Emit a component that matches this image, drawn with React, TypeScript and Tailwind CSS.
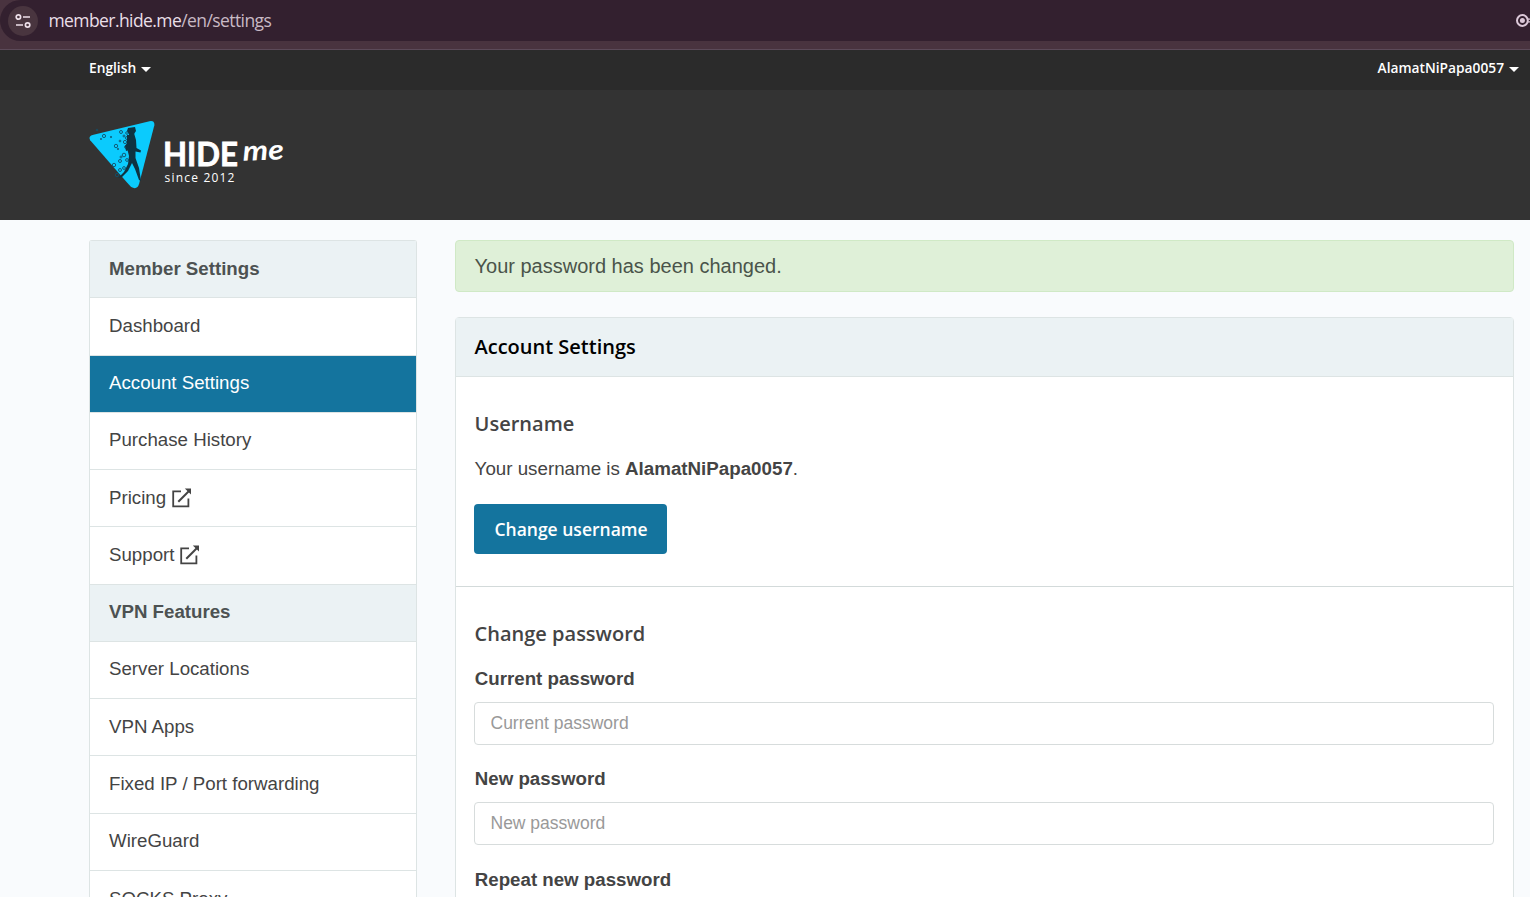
import React from 'react';

type NavItem = { label: string; type?: 'header' | 'active' | 'external' };

const navItems: NavItem[] = [
  { label: 'Member Settings', type: 'header' },
  { label: 'Dashboard' },
  { label: 'Account Settings', type: 'active' },
  { label: 'Purchase History' },
  { label: 'Pricing', type: 'external' },
  { label: 'Support', type: 'external' },
  { label: 'VPN Features', type: 'header' },
  { label: 'Server Locations' },
  { label: 'VPN Apps' },
  { label: 'Fixed IP / Port forwarding' },
  { label: 'WireGuard' },
  { label: 'SOCKS Proxy' },
];

const ExternalIcon = () => (
  <svg width="20" height="20" viewBox="0 0 20 20" fill="none" stroke="#444" strokeWidth="1.8">
    <path d="M9 3.4H1.2V18.4H16.4V10.5" />
    <path d="M6.3 13.7L17 3" strokeWidth="2" />
    <path d="M12.8 0.4H19V6.6Z" fill="#444" stroke="none" />
  </svg>
);

const Caret = () => (
  <span className="mt-0.5 border-x-[5px] border-t-[5px] border-x-transparent border-t-white" />
);

const bubbles = [
  [15, 16, 1.6], [8, 10, 0.8], [22, 17, 0.7], [32, 12, 1.5], [35, 16, 1], [38, 13, 1.3], [12, 19, 0.6],
  [31, 21, 0.9], [37, 27, 1.4], [29, 29, 0.7], [27, 26, 1.7], [35, 35, 1.8], [38, 40, 1.4], [32, 37, 1],
  [25, 45, 1.7], [31, 41, 1.5], [31, 50, 1.5], [35, 48, 1.4], [28, 55, 1.7], [36, 22, 1.6], [38, 18, 1.5],
];

const Logo = () => (
  <div className="flex">
    <svg width="74" height="72" viewBox="0 0 74 72">
      <path
        d="M4.5 14.8L60.5 1.2Q66 0.3 65.3 5.5L50.2 63.5Q48.2 70.5 42.2 67Q40 65 1.2 20.2Q-1.2 16.2 4.5 14.8Z"
        fill="#0bcbfd"
      />
      <g fill="none" stroke="#12506a" strokeWidth="0.9">
        {bubbles.map(([x, y, r], i) => (
          <circle key={i} cx={x} cy={y} r={r} />
        ))}
      </g>
      <g fill="#0e3342">
        <path d="M39 8L46 7L47 11L45 14L40 14L38 11Z" />
        <path d="M40 14L45 13L47 20L47.5 28L52 30.5L51.5 32.5L46.5 31.5L46.5 38L50 48L52 61L50 60L46 49L43 43L39 51L33 57L29 58L35 52L39 44L40 36L38 28Z" />
        <path d="M38 15L41 15L40 30L37 31L36 26L38 23Z" />
      </g>
    </svg>
    <div className="pt-[18px] text-white">
      <div className="flex h-[32px]">
        <svg className="overflow-visible" width="78" height="31" viewBox="0 0 78 31">
          <text x="0" y="28" fill="#fff" stroke="#fff" strokeWidth="0.8" fontSize="33" fontWeight="700" fontFamily="Lato, sans-serif" textLength="75" lengthAdjust="spacingAndGlyphs">HIDE</text>
        </svg>
        <svg className="overflow-visible" width="45" height="31" viewBox="0 0 45 31">
          <text x="2" y="22" transform="rotate(-2 22 20)" fill="#fff" fontSize="28" fontStyle="italic" fontWeight="700" fontFamily="Lato, sans-serif" textLength="41" lengthAdjust="spacingAndGlyphs">me</text>
        </svg>
      </div>
      <div className="pl-[1.5px] font-['Open_Sans',sans-serif] text-[12px] leading-4 tracking-[1.2px]">since 2012</div>
    </div>
  </div>
);

const Sidebar = () => (
  <nav className="w-[328px] shrink-0 rounded-t-[3px] border-x border-t border-[#dde4e4] bg-white">
    {navItems.map((item) => (
      <div
        key={item.label}
        className={`flex h-[57.27px] items-center gap-1.5 border-b border-[#dde4e4] pl-[19px] pb-px text-[18.7px] ${
          item.type === 'header'
            ? 'bg-[#ebf2f4] font-bold text-[#4d5252]'
            : item.type === 'active'
              ? 'bg-[#14749e] text-white'
              : 'text-[#444]'
        }`}
      >
        <span>{item.label}</span>
        {item.type === 'external' && <ExternalIcon />}
      </div>
    ))}
  </nav>
);

const Field = ({ label }: { label: string }) => (
  <div className="mb-[19.3px]">
    <label className="mb-[9px] block pl-[0.8px] text-[18.7px] leading-[29px] font-bold text-[#444]">{label}</label>
    <input
      type="password"
      placeholder={label}
      className="block h-[43px] w-full rounded-[4px] border border-[#d7dcdc] bg-white px-[15.5px] text-[17.5px] placeholder:text-[#999]"
    />
  </div>
);

export default function App() {
  return (
    <div className="h-[897px] overflow-hidden bg-[#f9fbfd] font-['Liberation_Sans',Arial,sans-serif] text-[#444]">
      {/* Browser address bar */}
      <div className="h-[50px] border-b border-[#5c4a59] bg-[#49333f]">
        <div className="flex h-[41px] items-center justify-between rounded-l-full bg-[#33202f]">
          <div className="flex items-center">
            <div className="ml-2 flex size-[30px] items-center justify-center rounded-full bg-[#49353f]">
              <svg width="16" height="16" viewBox="0 0 16 16" fill="none" stroke="#eee0ea" strokeWidth="1.7">
                <circle cx="3.4" cy="4" r="2.2" />
                <path d="M8 4H15M1 12H8" />
                <circle cx="12.6" cy="12" r="2.2" />
              </svg>
            </div>
            <span className="ml-[10.5px] font-['Open_Sans',sans-serif] text-[17.5px] tracking-[-0.58px] text-[#eadfe8]">
              member.hide.me<span className="text-[#c9bac5]">/en/settings</span>
            </span>
          </div>
          <svg width="15" height="14" viewBox="0 0 15 14" fill="none" stroke="#dcc8d8" strokeWidth="2">
            <circle cx="7.4" cy="6.5" r="5.4" />
            <circle cx="7.4" cy="6.5" r="2.5" fill="#dcc8d8" stroke="none" />
            <path d="M12 5.2H15M12 7.8H15" strokeWidth="1.2" />
          </svg>
        </div>
      </div>

      {/* Top bar */}
      <div className="flex h-10 items-center justify-between bg-[#2b2b2b] pr-[11px] pb-[3px] pl-[89px] font-['Open_Sans',sans-serif] text-[13.75px] font-semibold text-white">
        <div className="flex items-center gap-[5px]">English <Caret /></div>
        <div className="flex items-center gap-[5px]">AlamatNiPapa0057 <Caret /></div>
      </div>

      <header className="h-[130px] bg-[#333] pt-[30px] pl-[89px]">
        <Logo />
      </header>

      <div className="flex gap-[38px] pt-5 pr-4 pl-[89px]">
        <Sidebar />
        <main className="flex-1">
          <div className="mb-[25px] flex h-[52px] items-center rounded-[4px] border border-[#d0e9c6] bg-[#dff0d8] px-[18.5px] text-[20px] text-[#4a544a]">
            Your password has been changed.
          </div>

          <section className="h-[640px] rounded-t-[4px] border border-[#dde4e4] bg-white">
            <h2 className="h-[59px] border-b border-[#dde4e4] bg-[#ebf2f4] px-[18.5px] font-['Open_Sans',sans-serif] text-[20px] leading-[58px] font-semibold text-black">
              Account Settings
            </h2>
            <div className="h-[210px] border-b border-[#d3dada] pt-8 pr-[19px] pl-[18px]">
              <h3 className="pl-[0.6px] font-['Open_Sans',sans-serif] text-[20px] leading-[30px] font-semibold">Username</h3>
              <p className="mt-[15px] pl-[0.6px] text-[18.75px] leading-[30px]">
                Your username is <b>AlamatNiPapa0057</b>.
              </p>
              <button className="mt-[20px] h-[50px] w-[193px] rounded-[4px] bg-[#14749e] pl-px font-['Open_Sans',sans-serif] text-[17.5px] font-semibold text-white">
                Change username
              </button>
            </div>
            <div className="pt-8 pr-[19px] pl-[18px]">
              <h3 className="mb-[15px] pl-[0.6px] font-['Open_Sans',sans-serif] text-[20px] leading-[30px] font-semibold">Change password</h3>
              <Field label="Current password" />
              <Field label="New password" />
              <Field label="Repeat new password" />
            </div>
          </section>
        </main>
      </div>
    </div>
  );
}
